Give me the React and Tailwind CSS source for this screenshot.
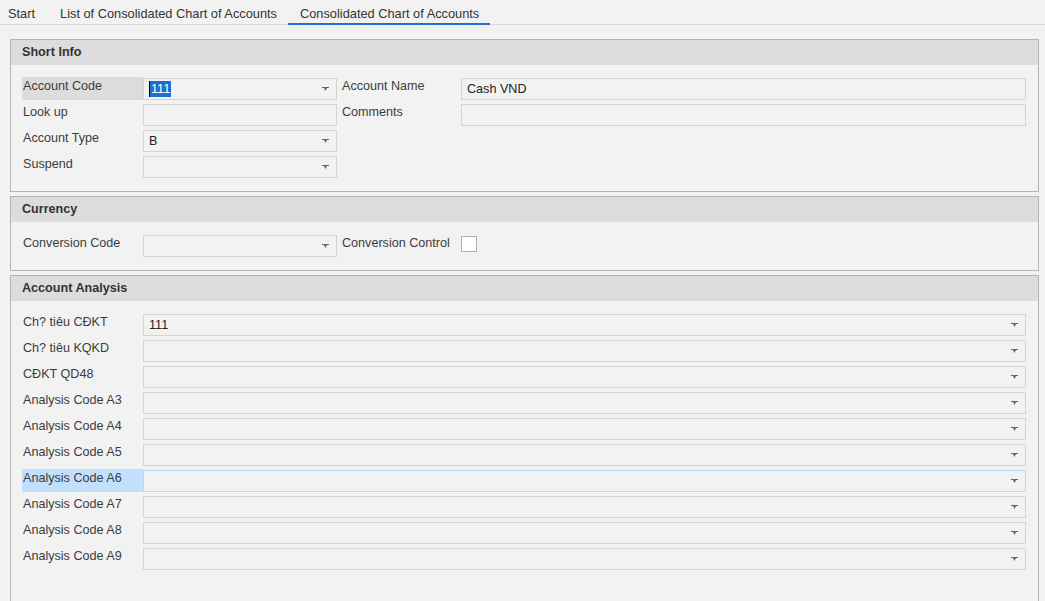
import React from 'react';

function Arrow() {
    return (
        <svg width="7" height="4" viewBox="0 0 7 4" className="shrink-0">
            <polygon points="0,0 7,0 7,1 5,1 3.5,4 2,1 0,1" fill="#666" />
        </svg>
    );
}

function Field({ value, combo, focus, selected, className }) {
    return (
        <div className={`flex h-[22px] items-center bg-[#f2f2f2] border ${focus ? 'border-[#b3d7f7]' : 'border-[#d4d4d4]'} pl-[5px] pr-[7px] ${className || ''}`}>
            <div className="flex-1 text-[12.6px] text-[#222] leading-none">
                {selected ? (
                    <span className="border-l border-black bg-[#1f6fd0] text-white px-[1px] py-[1px]">{value}</span>
                ) : value}
            </div>
            {combo && <Arrow />}
        </div>
    );
}

function Label({ text, hl }) {
    const bg = hl === 'gray' ? 'bg-[#dcdcdc]' : hl === 'blue' ? 'bg-[#c2e0fb]' : '';
    return (
        <div className={`w-[121px] shrink-0 h-[23px] -mt-[1px] pl-[1px] text-[12.6px] text-[#3c3c3c] ${bg}`}>{text}</div>
    );
}

function Panel({ title, children, className }) {
    return (
        <div className={`border border-[#b4b4b4] ml-[10px] mr-[6px] ${className || ''}`}>
            <div className="h-[25px] bg-[#dddddd] pl-[11px] flex items-center text-[12.6px] font-bold text-[#333]">{title}</div>
            <div className="pl-[11px] pr-[12px] pt-[13px] pb-[13px] flex flex-col gap-[4px]">{children}</div>
        </div>
    );
}

export default function App() {
    const analysis = [
        { name: "Ch? tiêu CĐKT", value: "111" },
        { name: "Ch? tiêu KQKD" },
        { name: "CĐKT QD48" },
        { name: "Analysis Code A3" },
        { name: "Analysis Code A4" },
        { name: "Analysis Code A5" },
        { name: "Analysis Code A6", focus: true },
        { name: "Analysis Code A7" },
        { name: "Analysis Code A8" },
        { name: "Analysis Code A9" },
    ];

    return (
        <div className="w-[1045px] h-[601px] overflow-hidden bg-[#f2f2f2]" style={{ fontFamily: '"Liberation Sans", Arial, sans-serif' }}>
            <div className="h-[25px] border-b border-[#d8d8d8] flex text-[12.8px] text-[#333]">
                <div className="pl-[8px] pr-[25px] pt-[4px]">Start</div>
                <div className="pr-[11px] pt-[4px]">List of Consolidated Chart of Accounts</div>
                <div className="pl-[12px] pr-[11px] pt-[4px] border-b-2 border-[#1f6fd0] -mb-[1px]">Consolidated Chart of Accounts</div>
            </div>

            <div className="pt-[14px] flex flex-col gap-[4px]">
                <Panel title="Short Info">
                    <div className="flex">
                        <Label text="Account Code" hl="gray" />
                        <Field value="111" combo selected className="w-[194px] border-[#c8c8c8]" />
                        <div className="w-[4px]" />
                        <Label text="Account Name" />
                        <Field value="Cash VND" className="flex-1 -ml-[1px]" />
                    </div>
                    <div className="flex">
                        <Label text="Look up" />
                        <Field className="w-[194px]" />
                        <div className="w-[4px]" />
                        <Label text="Comments" />
                        <Field className="flex-1 -ml-[1px]" />
                    </div>
                    <div className="flex">
                        <Label text="Account Type" />
                        <Field value="B" combo className="w-[194px]" />
                    </div>
                    <div className="flex">
                        <Label text="Suspend" />
                        <Field combo className="w-[194px]" />
                    </div>
                </Panel>

                <Panel title="Currency">
                    <div className="flex">
                        <Label text="Conversion Code" />
                        <Field combo className="w-[194px]" />
                        <div className="w-[4px]" />
                        <Label text="Conversion Control" />
                        <div className="-ml-[1px] mt-[1px] w-[16px] h-[16px] bg-white border border-[#b0b0b0]" />
                    </div>
                </Panel>

                <Panel title="Account Analysis" className="pb-[40px]">
                    {analysis.map((row) => (
                        <div className="flex" key={row.name}>
                            <Label text={row.name} hl={row.focus ? 'blue' : null} />
                            <Field value={row.value} combo focus={row.focus} className="flex-1" />
                        </div>
                    ))}
                </Panel>
            </div>
        </div>
    );
}
